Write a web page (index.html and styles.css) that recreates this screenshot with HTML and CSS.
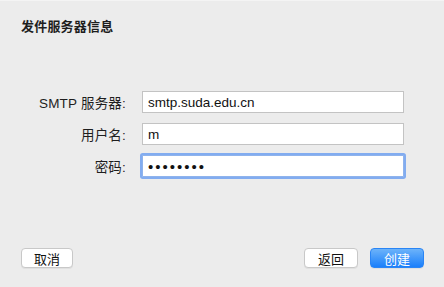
FILE: index.html
```html
<!DOCTYPE html>
<html lang="zh-CN">
<head>
    <meta charset="UTF-8">
    <meta name="viewport" content="width=device-width, initial-scale=1.0">
    <title>发件服务器信息</title>
    <link rel="stylesheet" href="styles.css">
</head>
<body>
    <div class="dialog">
        <h1 class="dialog__title">发件服务器信息</h1>
        <form class="dialog__form">
            <label class="dialog__label" for="server">SMTP 服务器:</label>
            <input class="dialog__field" id="server" type="text" value="smtp.suda.edu.cn">
            <label class="dialog__label" for="user">用户名:</label>
            <input class="dialog__field" id="user" type="text" value="m">
            <label class="dialog__label" for="pass">密码:</label>
            <input class="dialog__field dialog__field--focus" id="pass" type="password" value="12345678">
        </form>
        <div class="dialog__footer">
            <button class="dialog__button">取消</button>
            <div class="dialog__actions">
                <button class="dialog__button">返回</button>
                <button class="dialog__button dialog__button--primary">创建</button>
            </div>
        </div>
    </div>
</body>
</html>
```

FILE: styles.css
```css
:root {
    --bg: #ececec;
    --text: #1e1e1e;
    --border: #c3c3c3;
    --ring: #82acf0;
    --font: "Liberation Sans", "Noto Sans CJK SC", sans-serif;
}

* {
    margin: 0;
    padding: 0;
    box-sizing: border-box;
}

body {
    background: var(--bg);
    font-family: var(--font);
    color: var(--text);
}

.dialog {
    height: 287px;
    display: flex;
    flex-direction: column;
    padding: 18px 20px 19px 21px;
    border-top: 1px solid #f4f4f4;
}

.dialog__title {
    font-size: 13px;
    line-height: 16px;
    font-weight: bold;
    letter-spacing: 0.2px;
}

.dialog__form {
    display: grid;
    grid-template-columns: 105px 262px;
    grid-auto-rows: 22px;
    column-gap: 16px;
    row-gap: 10px;
    margin-top: 56px;
    align-items: center;
}

.dialog__label {
    font-size: 13.5px;
    text-align: right;
    letter-spacing: 0.2px;
}

.dialog__field {
    height: 22px;
    padding: 0 5px;
    border: 1px solid var(--border);
    background: #fff;
    outline: 0;
    font-family: var(--font);
    font-size: 13.5px;
    color: #111;
}

.dialog__field--focus {
    border-color: #8fb3ec;
    box-shadow: 0 0 0 2px var(--ring);
    border-radius: 1px;
    font-size: 15px;
    letter-spacing: 2px;
}

.dialog__footer {
    margin-top: auto;
    display: flex;
    justify-content: space-between;
}

.dialog__actions {
    display: flex;
    gap: 12px;
}

.dialog__button {
    width: 54px;
    height: 20px;
    border: 1px solid #c8c8c8;
    border-radius: 4px;
    background: #fff;
    font-family: var(--font);
    font-size: 13px;
    color: #111;
    box-shadow: 0 1px 0 rgba(0, 0, 0, 0.05);
}

.dialog__footer > .dialog__button {
    width: 52px;
}

.dialog__button--primary {
    border-color: #2a85f5;
    background: linear-gradient(#6cb3fa, #1a7ffb);
    color: #fff;
}
```
